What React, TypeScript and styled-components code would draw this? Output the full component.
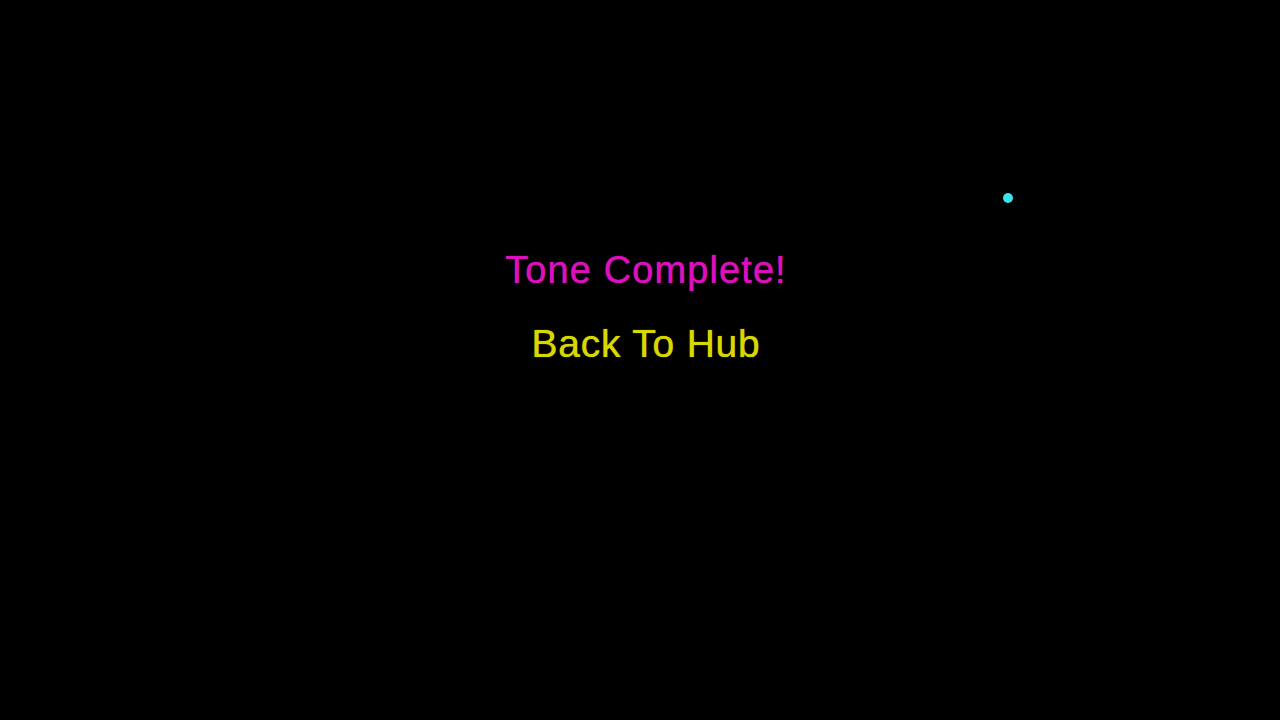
import styled, { createGlobalStyle } from "styled-components";

const GlobalStyle = createGlobalStyle`
  html, body {
    margin: 0;
    padding: 0;
    background: #000;
  }
`;

const Screen = styled.div`
  position: relative;
  display: flex;
  flex-direction: column;
  align-items: center;
  gap: 30px;
  width: 1280px;
  height: 720px;
  padding: 248px 0 0 12px;
  box-sizing: border-box;
  background: #000;
  overflow: hidden;
  font-family: "Liberation Sans", Arial, sans-serif;
`;

const Label = styled.div<{ $color: string; $size: number; $spacing: number }>`
  font-size: ${(p) => p.$size}px;
  line-height: 44px;
  letter-spacing: ${(p) => p.$spacing}px;
  color: ${(p) => p.$color};
  text-shadow: 0 0 1px ${(p) => p.$color};
  white-space: nowrap;
`;

const Dot = styled.div`
  position: absolute;
  left: 1003px;
  top: 193px;
  width: 10px;
  height: 10px;
  border-radius: 50%;
  background: #38e4ec;
`;

export default function App() {
  return (
    <>
      <GlobalStyle />
      <Screen>
        <Label $color="#dc10bc" $size={38} $spacing={1.1}>
          Tone Complete!
        </Label>
        <Label $color="#d8d800" $size={39} $spacing={0.8}>
          Back To Hub
        </Label>
        <Dot />
      </Screen>
    </>
  );
}
